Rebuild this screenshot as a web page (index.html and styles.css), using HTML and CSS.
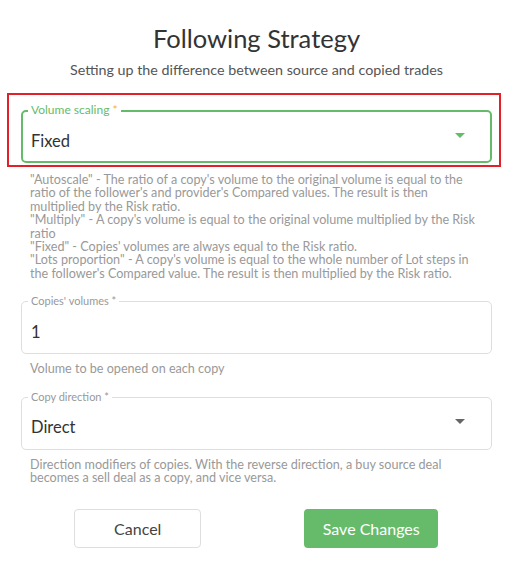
FILE: index.html
```html
<!DOCTYPE html>
<html lang="en">
<head>
  <meta charset="UTF-8" />
  <meta name="viewport" content="width=device-width, initial-scale=1" />
  <title>Following Strategy</title>
  <link rel="stylesheet" href="styles.css">
</head>
<body>

  <div class="dialog">
    <h1 class="title">Following Strategy</h1>
    <p class="subtitle">Setting up the difference between source and copied trades</p>

    <div class="highlight">
      <div class="field active">
        <span class="label">Volume scaling <span class="req">*</span></span>
        <span class="value">Fixed</span>
        <span class="arrow"></span>
      </div>
    </div>
    <div class="helper">
      <p>"Autoscale" - The ratio of a copy's volume to the original volume is equal to the ratio of the follower's and provider's Compared values. The result is then multiplied by the Risk ratio.</p>
      <p>"Multiply" - A copy's volume is equal to the original volume multiplied by the Risk ratio</p>
      <p>"Fixed" - Copies' volumes are always equal to the Risk ratio.</p>
      <p>"Lots proportion" - A copy's volume is equal to the whole number of Lot steps in the follower's Compared value. The result is then multiplied by the Risk ratio.</p>
    </div>

    <div class="field spaced">
      <span class="label">Copies' volumes *</span>
      <span class="value">1</span>
    </div>
    <div class="helper">
      <p>Volume to be opened on each copy</p>
    </div>

    <div class="field spaced">
      <span class="label">Copy direction *</span>
      <span class="value">Direct</span>
      <span class="arrow"></span>
    </div>
    <div class="helper">
      <p>Direction modifiers of copies. With the reverse direction, a buy source deal becomes a sell deal as a copy, and vice versa.</p>
    </div>

    <div class="actions">
      <button class="btn btn-cancel">Cancel</button>
      <button class="btn btn-save">Save Changes</button>
    </div>
  </div>

</body>
</html>
```

FILE: styles.css
```css
body {
  font-family: Lato, "Noto Sans", sans-serif;
  margin: 0;
  background: #fff;
  color: #333;
}

.dialog {
  padding: 23px 21px 0;
}

.title {
  font-size: 25.5px;
  line-height: 30px;
  font-weight: 400;
  text-align: center;
  margin: 0;
  color: #333;
}

.subtitle {
  font-size: 14.3px;
  line-height: 18px;
  text-align: center;
  margin: 8px 0 0;
  color: #555;
}

.highlight {
  border: 2px solid #e32027;
  margin: 14px -9px 0 -14px;
  padding: 15px 7px 2px 12px;
}

.field {
  position: relative;
  display: flex;
  align-items: center;
  box-sizing: border-box;
  height: 53px;
  border: 1px solid #dedede;
  border-radius: 5px;
  padding: 2px 9px 0;
}

.field.active {
  border: 2px solid #66bb6a;
  padding-left: 8px;
}

.field.spaced {
  margin-top: 21px;
}

.label {
  position: absolute;
  top: -7px;
  left: 6px;
  padding: 0 3px;
  background: #fff;
  font-size: 11px;
  line-height: 12px;
  color: #999;
}

.field.active .label {
  top: -8px;
  left: 5px;
  font-size: 12px;
  color: #66bb6a;
}

.req {
  color: #f5b041;
}

.value {
  flex: 1;
  padding-top: 6px;
  font-size: 16.5px;
  color: #333;
}

.arrow {
  width: 0;
  height: 0;
  border-left: 5px solid transparent;
  border-right: 5px solid transparent;
  border-top: 5px solid #666;
  margin: -5px 17px 0 0;
}

.field.active .arrow {
  border-top-color: #66bb6a;
  margin-right: 16px;
}

.helper {
  margin: 6px 12px 0 9px;
  font-size: 12.6px;
  line-height: 13.4px;
  color: #999;
}

.field.spaced + .helper {
  margin-top: 8px;
}

.helper p {
  margin: 0;
}

.actions {
  display: grid;
  grid-template-columns: 1fr 1fr;
  justify-items: center;
  margin: 25px 4px 0 0;
}

.btn {
  font-family: inherit;
  font-size: 16px;
  height: 39px;
  border-radius: 4px;
  cursor: pointer;
}

.btn-cancel {
  width: 127px;
  background: #fff;
  border: 1px solid #dedede;
  color: #444;
}

.btn-save {
  width: 134px;
  background: #66bb6a;
  border: none;
  color: #fff;
}
```
